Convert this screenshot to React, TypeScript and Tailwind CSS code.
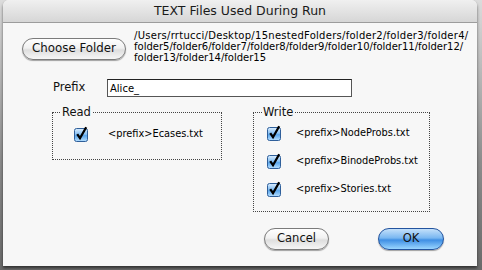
const ui = "font-['DejaVu_Sans','Liberation_Sans',sans-serif]";

function CheckBox() {
  return (
    <svg width="16" height="16" viewBox="0 0 16 16" className="shrink-0">
      <defs>
        <linearGradient id="cbfill" x1="0" y1="0" x2="0" y2="1">
          <stop offset="0" stopColor="#dceefe" />
          <stop offset="0.45" stopColor="#86bff3" />
          <stop offset="0.55" stopColor="#5aa6ec" />
          <stop offset="1" stopColor="#b8e0ff" />
        </linearGradient>
      </defs>
      <rect x="1.5" y="2.5" width="13" height="13" rx="2" fill="url(#cbfill)" stroke="#2f5f9a" />
      <path d="M4.2 8.2 L7 12.2 L13.2 1.2" stroke="#000" strokeWidth="2.3" fill="none" />
    </svg>
  );
}

function FileRow({ name, gap }: { name: string; gap: string }) {
  return (
    <div className="flex items-center">
      <CheckBox />
      <span className={`${gap} text-[9.8px] text-black`}>{'<prefix>' + name}</span>
    </div>
  );
}

const pill =
  'h-[22px] rounded-full border text-[#111] flex items-center justify-center shadow-[0_1px_1px_rgba(0,0,0,0.35)]';

export default function App() {
  return (
    <div className={`w-[482px] h-[270px] pl-[3px] bg-[linear-gradient(to_bottom,#dcdcdc,#8c8c8c_60%,#6a6a6a)] ${ui}`}>
      <div className="w-[474px] h-[266px] rounded-t-[6px] bg-[#f7f7f7] flex flex-col overflow-hidden shadow-[0_2px_3px_rgba(0,0,0,0.55)]">
        {/* Title bar */}
        <div className="h-[23px] shrink-0 flex items-center justify-center border-b border-[#9c9c9c] bg-[linear-gradient(to_bottom,#f0f0f0,#d6d6d6)] text-[12.5px] text-[#1a1a1a]">
          TEXT Files Used During Run
        </div>

        {/* Folder row */}
        <div className="flex items-start pl-[19px] pt-[7px]">
          <button className={`${pill} mt-[8px] w-[104px] text-[11.8px] border-[#7b7b7b] bg-[linear-gradient(to_bottom,#ffffff,#f1f1f1_45%,#dedede_55%,#f6f6f6)]`}>
            Choose Folder
          </button>
          <div className="ml-[8px] text-[10px] leading-[11px] text-black whitespace-nowrap">
            <div className="tracking-[0.27px]">/Users/rrtucci/Desktop/15nestedFolders/folder2/folder3/folder4/</div>
            <div>folder5/folder6/folder7/folder8/folder9/folder10/folder11/folder12/</div>
            <div>folder13/folder14/folder15</div>
          </div>
        </div>

        {/* Prefix row */}
        <div className="mt-[16px] pl-[50px] flex items-center h-[18px]">
          <span className="w-[54px] text-[11.5px] text-[#111]">Prefix</span>
          <div className="w-[245px] h-[18px] bg-white border border-[#555] border-t-[#222] flex items-center pl-[2px] text-[10px] text-black">
            Alice_
          </div>
        </div>

        {/* Groups */}
        <div className="mt-[15px] flex items-start">
          <div className="ml-[49px] w-[170px] h-[48px] border border-dotted border-[#444]">
            <span className="block w-fit -mt-[8px] ml-[8px] px-[1px] bg-[#f7f7f7] leading-[15px] text-[11.5px] text-[#111]">
              Read
            </span>
            <div className="mt-[6px] ml-[20px]">
              <FileRow name="Ecases.txt" gap="ml-[19px]" />
            </div>
          </div>
          <div className="ml-[31px] w-[177px] h-[100px] border border-dotted border-[#444]">
            <span className="block w-fit -mt-[8px] ml-[8px] px-[1px] bg-[#f7f7f7] leading-[15px] text-[11.5px] text-[#111]">
              Write
            </span>
            <div className="mt-[5px] ml-[12px] flex flex-col gap-[12px]">
              <FileRow name="NodeProbs.txt" gap="ml-[14px]" />
              <FileRow name="BinodeProbs.txt" gap="ml-[14px]" />
              <FileRow name="Stories.txt" gap="ml-[14px]" />
            </div>
          </div>
        </div>

        {/* Buttons */}
        <div className="mt-[16px] pl-[261px] flex gap-[49px]">
          <button className={`${pill} w-[65px] text-[11.5px] border-[#7b7b7b] bg-[linear-gradient(to_bottom,#ffffff,#f1f1f1_45%,#dedede_55%,#f6f6f6)]`}>
            Cancel
          </button>
          <button className={`${pill} w-[66px] text-[11.5px] border-[#23549f] bg-[linear-gradient(to_bottom,#c4e0fa,#79b7f1_45%,#3f8fe4_55%,#9ad6ff)]`}>
            OK
          </button>
        </div>
      </div>
    </div>
  );
}
